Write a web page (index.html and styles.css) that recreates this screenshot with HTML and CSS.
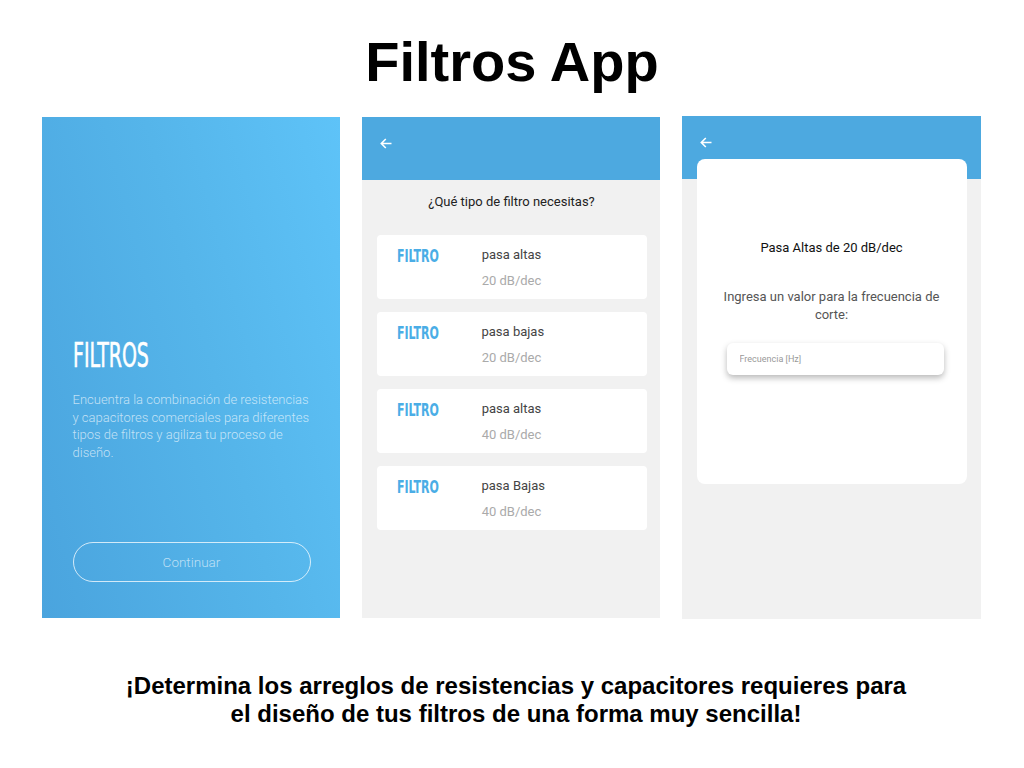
FILE: index.html
```html
<!DOCTYPE html>
<html lang="es">

<head>
  <meta charset="UTF-8">
  <meta name="viewport" content="width=device-width, initial-scale=1.0">
  <title>Filtros App</title>
  <link rel="stylesheet" href="styles.css">
</head>

<body>
  <h1 class="title">Filtros App</h1>

  <div class="screens">
    <!-- pantalla de inicio -->
    <div class="screen intro">
      <div class="intro-title"><span>FILTROS</span></div>
      <p class="intro-text">Encuentra la combinación de resistencias<br>y capacitores comerciales para diferentes<br>tipos de filtros y agiliza tu proceso de<br>diseño.</p>
      <button class="intro-btn" type="button">Continuar</button>
    </div>

    <!-- lista de filtros -->
    <div class="screen list">
      <div class="appbar">
        <svg class="back" width="12" height="11" viewBox="0 0 12 11">
          <path d="M11.5 5.5H1.5M5.8 1L1.3 5.5L5.8 10" fill="none" stroke="#fff" stroke-width="1.6" />
        </svg>
      </div>
      <div class="list-body">
        <p class="question">¿Qué tipo de filtro necesitas?</p>
        <div class="filter-card">
          <div class="filter-tag"><span>FILTRO</span></div>
          <div class="filter-info">
            <div class="filter-name">pasa altas</div>
            <div class="filter-db">20 dB/dec</div>
          </div>
        </div>
        <div class="filter-card">
          <div class="filter-tag"><span>FILTRO</span></div>
          <div class="filter-info">
            <div class="filter-name">pasa bajas</div>
            <div class="filter-db">20 dB/dec</div>
          </div>
        </div>
        <div class="filter-card">
          <div class="filter-tag"><span>FILTRO</span></div>
          <div class="filter-info">
            <div class="filter-name">pasa altas</div>
            <div class="filter-db">40 dB/dec</div>
          </div>
        </div>
        <div class="filter-card">
          <div class="filter-tag"><span>FILTRO</span></div>
          <div class="filter-info">
            <div class="filter-name">pasa Bajas</div>
            <div class="filter-db">40 dB/dec</div>
          </div>
        </div>
      </div>
    </div>

    <!-- formulario de frecuencia -->
    <div class="screen form">
      <div class="appbar">
        <svg class="back" width="12" height="11" viewBox="0 0 12 11">
          <path d="M11.5 5.5H1.5M5.8 1L1.3 5.5L5.8 10" fill="none" stroke="#fff" stroke-width="1.6" />
        </svg>
      </div>
      <div class="form-card">
        <p class="form-title">Pasa Altas de 20 dB/dec</p>
        <p class="form-label">Ingresa un valor para la frecuencia de<br>corte:</p>
        <input class="freq" type="text" placeholder="Frecuencia [Hz]">
      </div>
    </div>
  </div>

  <p class="tagline">¡Determina los arreglos de resistencias y capacitores requieres para<br>el diseño de tus filtros de una forma muy sencilla!</p>
</body>

</html>
```

FILE: styles.css
```css
body {
  margin: 0;
  background-color: #fff;
  font-family: "Liberation Sans", Arial, sans-serif;
  color: #000;
}

.title {
  margin: 30px 0 0;
  font-size: 56px;
  line-height: 64px;
  font-weight: bold;
  text-align: center;
}

.screens {
  display: flex;
  justify-content: center;
  gap: 22px;
  margin-top: 23px;
  padding-right: 2px;
}

.screen {
  width: 298px;
  height: 501px;
  display: flex;
  flex-direction: column;
  background-color: #f1f1f1;
  font-family: Roboto, sans-serif;
}

/* pantalla 1 */
.intro {
  box-sizing: border-box;
  padding: 220px 29px 36px 31px;
  background: linear-gradient(75deg, #4aa4de 0%, #55b5ea 55%, #5ec3f8 100%);
}

.intro-title {
  height: 36px;
  line-height: 36px;
  font-family: "DejaVu Sans Condensed", sans-serif;
  font-size: 34px;
  font-weight: normal;
  color: #fff;
}

.intro-title span {
  display: inline-block;
  transform: scaleX(0.62);
  transform-origin: left;
  -webkit-text-stroke: 0.6px #fff;
}

.intro-text {
  margin: 18px 0 0;
  font-size: 13px;
  font-weight: 300;
  line-height: 17.5px;
  color: rgba(255, 255, 255, 0.66);
}

.intro-btn {
  margin-top: auto;
  height: 40px;
  width: 238px;
  border: 1.5px solid rgba(255, 255, 255, 0.75);
  border-radius: 20px;
  background: transparent;
  color: rgba(255, 255, 255, 0.62);
  font-family: Roboto, sans-serif;
  font-size: 13.5px;
  font-weight: 300;
}

/* barra superior */
.appbar {
  height: 63px;
  flex-shrink: 0;
  box-sizing: border-box;
  padding: 21px 0 0 18px;
  background-color: #4da9e0;
}

.back {
  display: block;
}

/* pantalla 2 */
.list-body {
  padding: 13px 13px 0 15px;
}

.question {
  margin: 0 0 24px;
  font-size: 13px;
  line-height: 18px;
  text-align: center;
  color: #222;
}

.filter-card {
  display: flex;
  height: 64px;
  box-sizing: border-box;
  margin-bottom: 13px;
  padding: 11px 0 0 20px;
  border-radius: 4px;
  background-color: #fff;
}

.filter-tag {
  width: 85px;
  height: 24px;
  line-height: 20px;
  font-family: "DejaVu Sans Condensed", sans-serif;
  font-size: 18px;
  font-weight: bold;
  color: #4aade6;
}

.filter-tag span {
  display: inline-block;
  transform: scaleX(0.68);
  transform-origin: left;
}

.filter-info {
  width: 60px;
  text-align: center;
  font-size: 13px;
  line-height: 18px;
}

.filter-name {
  color: #444;
  white-space: nowrap;
}

.filter-db {
  margin-top: 8px;
  color: #aaa;
  white-space: nowrap;
}

/* pantalla 3 */
.form {
  width: 299px;
  height: 503px;
  margin-top: -1px;
}

.appbar + .form-card {
  margin: -20px 14px 0 15px;
}

.form-card {
  height: 325px;
  box-sizing: border-box;
  padding-top: 80px;
  border-radius: 8px;
  background-color: #fff;
}

.form-title {
  margin: 0;
  font-size: 13px;
  line-height: 18px;
  text-align: center;
  color: #111;
}

.form-label {
  margin: 31px 0 0;
  font-size: 13px;
  line-height: 17.5px;
  text-align: center;
  color: #555;
}

.freq {
  display: block;
  width: 217px;
  height: 32px;
  box-sizing: border-box;
  margin: 20px 0 0 30px;
  padding: 0 13px;
  border: none;
  border-radius: 6px;
  box-shadow: 0 3px 6px rgba(0, 0, 0, 0.28);
  background-color: #fff;
  font-family: Roboto, sans-serif;
  font-size: 9px;
}

.freq::placeholder {
  color: #999;
}

.tagline {
  margin: 53px 0 0;
  padding-left: 8px;
  font-size: 24px;
  line-height: 28px;
  font-weight: bold;
  text-align: center;
}
```
